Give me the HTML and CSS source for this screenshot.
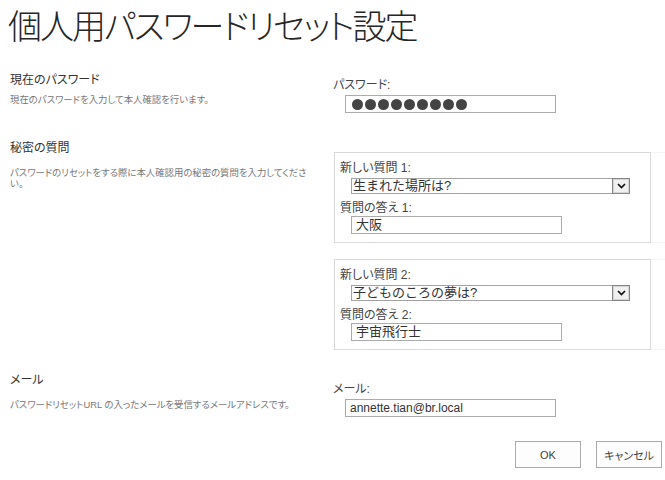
FILE: index.html
```html
<!DOCTYPE html>
<html lang="ja">
<head>
    <meta charset="UTF-8">
    <title>個人用パスワードリセット設定</title>
    <link rel="stylesheet" href="styles.css">
</head>
<body>

    <h1 class="page-title">個人用パスワードリセット設定</h1>

    <div class="section section-password">
        <div class="section-info">
            <h2 class="section-title">現在のパスワード</h2>
            <p class="section-desc">現在のパスワードを入力して本人確認を行います。</p>
        </div>
        <div class="section-body">
            <div class="field-label">パスワード:</div>
            <div class="text-box password-box">
                <span class="dot"></span><span class="dot"></span><span class="dot"></span>
                <span class="dot"></span><span class="dot"></span><span class="dot"></span>
                <span class="dot"></span><span class="dot"></span><span class="dot"></span>
            </div>
        </div>
    </div>

    <div class="section section-questions">
        <div class="section-info">
            <h2 class="section-title">秘密の質問</h2>
            <p class="section-desc">パスワードのリセットをする際に本人確認用の秘密の質問を入力してください。</p>
        </div>
        <div class="section-body">
            <div class="question">
                <div class="question-box">
                    <div class="field-label">新しい質問 1:</div>
                    <div class="select-box">
                        <span class="select-text">生まれた場所は?</span>
                        <span class="select-arrow">
                            <svg width="9" height="6" viewBox="0 0 9 6"><path d="M1 1 L4.5 4.5 L8 1" fill="none" stroke="#111" stroke-width="1.7"/></svg>
                        </span>
                    </div>
                    <div class="field-label">質問の答え 1:</div>
                    <div class="text-box answer-box">大阪</div>
                </div>
            </div>
            <div class="question">
                <div class="question-box">
                    <div class="field-label">新しい質問 2:</div>
                    <div class="select-box">
                        <span class="select-text">子どものころの夢は?</span>
                        <span class="select-arrow">
                            <svg width="9" height="6" viewBox="0 0 9 6"><path d="M1 1 L4.5 4.5 L8 1" fill="none" stroke="#111" stroke-width="1.7"/></svg>
                        </span>
                    </div>
                    <div class="field-label">質問の答え 2:</div>
                    <div class="text-box answer-box">宇宙飛行士</div>
                </div>
            </div>
        </div>
    </div>

    <div class="section section-mail">
        <div class="section-info">
            <h2 class="section-title">メール</h2>
            <p class="section-desc">パスワードリセットURL の入ったメールを受信するメールアドレスです。</p>
        </div>
        <div class="section-body">
            <div class="field-label">メール:</div>
            <div class="text-box mail-box">annette.tian@br.local</div>
        </div>
    </div>

    <div class="buttons">
        <button class="btn">OK</button>
        <button class="btn">キャンセル</button>
    </div>

</body>
</html>
```

FILE: styles.css
```css
body {
    margin: 0;
    font-family: 'Liberation Sans', 'Noto Sans CJK JP', sans-serif;
    color: #444444;
    background-color: #FFFFFF;
}

.page-title {
    margin: 0;
    padding-left: 8px;
    font-family: 'Noto Sans CJK JP', sans-serif;
    font-weight: 300;
    font-size: 34px;
    line-height: normal;
    letter-spacing: -2px;
    font-feature-settings: "palt";
    color: #262626;
}

.section {
    display: grid;
    grid-template-columns: 323px 1fr;
    padding-left: 10px;
}

.section-password {
    margin-top: 23px;
}

.section-questions {
    margin-top: 27px;
}

.section-mail {
    margin-top: 22px;
}

.section-title {
    margin: 0;
    font-size: 12px;
    font-weight: normal;
    line-height: 16px;
    color: #333333;
    font-feature-settings: "palt";
}

.section-desc {
    margin: 6px 0 0;
    width: 300px;
    font-size: 9.4px;
    line-height: 11px;
    color: #777777;
    font-feature-settings: "palt";
}

.section-questions .section-desc,
.section-mail .section-desc {
    margin-top: 11px;
}

.section-password .section-body {
    padding-top: 5px;
}

.section-questions .section-body {
    padding-top: 12px;
}

.section-mail .section-body {
    padding-top: 9px;
}

.field-label {
    font-size: 12px;
    line-height: 16px;
    color: #444444;
    font-feature-settings: "palt";
}

.text-box {
    box-sizing: border-box;
    width: 211px;
    height: 18px;
    margin: 2px 0 0 12px;
    padding-left: 4px;
    border: 1px solid #ababab;
    font-size: 13px;
    line-height: 16px;
    color: #333333;
    white-space: nowrap;
}

.password-box {
    display: flex;
    align-items: center;
    gap: 2px;
    padding-left: 6px;
}

.dot {
    width: 11px;
    height: 11px;
    border-radius: 50%;
    background-color: #444444;
}

.mail-box {
    font-size: 12px;
}

.question {
    border-top: 1px solid #f4f4f4;
    border-bottom: 1px solid #f4f4f4;
}

.question + .question {
    margin-top: 16px;
}

.question-box {
    box-sizing: border-box;
    width: 317px;
    margin: -1px 0 -1px 1px;
    padding: 7px 5px 8px;
    border: 1px solid #d9d9d9;
    background-color: #FFFFFF;
}

.question-box .field-label + .select-box,
.question-box .field-label + .text-box {
    margin-left: 11px;
}

.select-box {
    box-sizing: border-box;
    display: flex;
    width: 279px;
    height: 16px;
    margin-top: 2px;
    margin-bottom: 6px;
    border: 1px solid #a3a3a3;
    font-size: 13px;
    line-height: 14px;
    color: #333333;
}

.select-text {
    flex: 1;
    padding-left: 1px;
}

.select-arrow {
    box-sizing: border-box;
    width: 18px;
    margin: -1px -1px -1px 0;
    display: flex;
    align-items: center;
    justify-content: center;
    border: 1px solid #858585;
    box-shadow: inset 0 0 0 1px #d6d6d6;
    background-color: #f0f0f0;
}

.answer-box {
    margin-top: 0;
}

.buttons {
    display: flex;
    justify-content: flex-end;
    gap: 15px;
    margin-top: 24px;
    padding-right: 3px;
}

.btn {
    width: 66px;
    height: 27px;
    padding: 0;
    border: 1px solid #ababab;
    background-color: #fdfdfd;
    font-family: 'Liberation Sans', 'Noto Sans CJK JP', sans-serif;
    font-size: 11px;
    color: #444444;
    font-feature-settings: "palt";
}
```
